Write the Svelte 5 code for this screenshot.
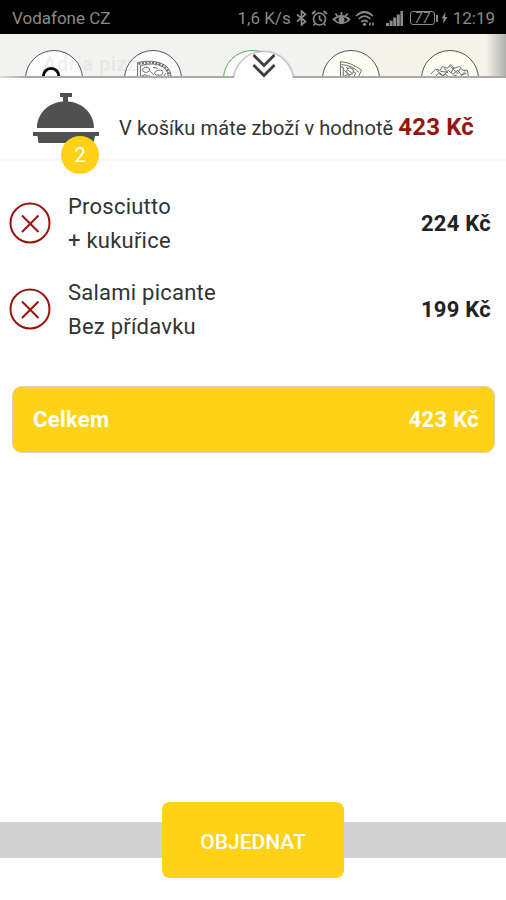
<script>
	let items = $state([
		{ id: 1, name: 'Prosciutto', note: '+ kukuřice', price: 224 },
		{ id: 2, name: 'Salami picante', note: 'Bez přídavku', price: 199 }
	]);

	const total = $derived(items.reduce((sum, item) => sum + item.price, 0));

	function removeItem(id) {
		items = items.filter((item) => item.id !== id);
	}
</script>

<div class="screen">
	<div class="status">
		<span class="carrier">Vodafone CZ</span>
		<div class="indicators">
			<span class="speed">1,6 K/s</span>
			<svg class="bluetooth" width="11" height="16" viewBox="0 0 11 16">
				<path d="M1 4.5l8.5 7L5.5 15V1l4 3.5-8.5 7" />
			</svg>
			<svg class="alarm" width="17" height="17" viewBox="0 0 17 17">
				<circle cx="8.5" cy="9" r="6" />
				<path d="M8.5 5.5V9l2.5 2M1 4l3.5-3M16 4l-3.5-3M4 13.8l-1.5 1.7M13 13.8l1.5 1.7" />
			</svg>
			<svg class="eye" width="19" height="17" viewBox="0 0 19 17">
				<path d="M1.5 9.5Q9.5 2.5 17.5 9.5Q9.5 17 1.5 9.5zM9.5 2v3M3.5 3.5l2 3M15.5 3.5l-2 3" />
				<circle class="solid" cx="9.5" cy="9.7" r="3" />
			</svg>
			<svg class="wifi" width="20" height="17" viewBox="0 0 20 17">
				<path d="M1 6Q9.5-2 18 6M3.6 9Q9.5 3.4 15.4 9M6.2 12Q9.5 9 12.8 12" />
				<circle class="solid" cx="9.5" cy="14.3" r="1.6" />
				<path d="M15 12.5v3M18 12.5v3" />
			</svg>
			<svg class="signal" width="19" height="17" viewBox="0 0 19 17">
				<path class="solid" d="M1 13h3v3H1zM4.6 10.500h3V16h-3zM8.200 7.500h3V16h-3zM11.800 4.500h3V16h-3zM15.400 1H18v15h-2.600z" />
			</svg>
			<span class="battery">77</span>
			<svg class="bolt" width="7" height="12" viewBox="0 0 7 12">
				<path class="solid" d="M4.5 0L0.5 6.5h2.2L2 12l4.5-7H4z" />
			</svg>
			<span class="clock">12:19</span>
		</div>
	</div>

	<div class="categories">
		<div class="category">
			<svg viewBox="0 0 58 28"><circle class="thick" cx="26" cy="26" r="8" /></svg>
		</div>
		<div class="category">
			<svg viewBox="0 0 58 28">
				<path d="M13 30V12q18-4 29 3q6 5 6 15M16 30V15q15-4 24 2q5 4 5 12" />
				<path class="dash" d="M14 13.5q17-4 27 3q5 4 5.5 13" />
				<path d="M18 19q3-4 7-1q2 3-2 4q-4 1-5-3M31 22q4-4 8-1q1 5-5 4q-4 0-3-3M17 26q4-3 7 0M26 21l4 4M29 17l5 1M42 23l-2 4M25 25l2 3" />
			</svg>
		</div>
		<div class="category active"></div>
		<div class="category">
			<svg viewBox="0 0 58 28">
				<path d="M18 30V11q12 1 22 9l-5 10M19 14q11 1 18 8M21 17v12M18 16l3 1" />
				<circle cx="28" cy="21" r="3.5" />
				<path d="M22 20l3 3M31 21l3 2-3 5M22 26q4-3 7 1M26 20l4 3M24 17l2 1" />
			</svg>
		</div>
		<div class="category">
			<svg viewBox="0 0 58 28">
				<path d="M9 24l5-5 5 1 2-4 5 2 4-4 3 4 6-2 3 4 5 0 1 6M12 29l5-6 5 3 5-6 5 4 5-4 4 5 5-2M15 20l6 5M23 18l4 5M33 17l-3 6M40 18l-4 6M45 21l-5 5M18 28l6-4 5 4 5-3 6 3M28 15l8 7M19 21l7 1" />
			</svg>
		</div>
		<span class="shop">Adria pizza</span>
		<button class="collapse" aria-label="Sbalit košík">
			<svg width="24" height="24" viewBox="0 0 24 24">
				<path d="M1.5 1l10.500 10.500L22.500 1M1.500 11L12 21.500 22.500 11" />
			</svg>
		</button>
	</div>

	<header>
		<div class="basket">
			<svg width="66" height="51" viewBox="0 0 66 51">
				<path d="M27 0h12v4h-4v4.500C49 9.500 61 20 61 35H4C4 20 16 9.500 30 8.500V4h-3zM0 39h66v4h-4l-1.500 7h-55L4.500 43H0z" />
			</svg>
			<span class="count">{items.length}</span>
		</div>
		<p>V košíku máte zboží v hodnotě <strong>{total} Kč</strong></p>
	</header>

	<ul>
		{#each items as item (item.id)}
			<li>
				<button class="remove" aria-label="Odebrat" onclick={() => removeItem(item.id)}>
					<svg width="42" height="42" viewBox="0 0 42 42">
						<circle cx="21" cy="21" r="19.500" />
						<path d="M13 13.500l16.500 16.500M29.500 13.500L13 30" />
					</svg>
				</button>
				<div class="desc">
					<span>{item.name}</span>
					<span>{item.note}</span>
				</div>
				<span class="price">{item.price} Kč</span>
			</li>
		{/each}
	</ul>

	<div class="total">
		<span>Celkem</span>
		<span>{total} Kč</span>
	</div>

	<footer>
		<button class="order">OBJEDNAT</button>
	</footer>
</div>

<style>
	:global(body) {
		background: #fefefe;
	}

	.screen {
		width: 506px;
		height: 900px;
		display: flex;
		flex-direction: column;
		overflow: hidden;
		background: #fefefe;
		color: #333;
		font-family: Roboto, sans-serif;
	}

	button {
		border: none;
		padding: 0;
		background: none;
		font-family: inherit;
	}

	svg {
		display: block;
	}

	/* status bar */
	.status {
		height: 34px;
		flex: none;
		box-sizing: border-box;
		display: flex;
		justify-content: space-between;
		align-items: center;
		padding: 2px 11px 0 12px;
		background: #000;
		color: #8a8a8a;
		font-size: 17px;
	}

	.indicators {
		display: flex;
		align-items: center;
	}

	.indicators svg {
		fill: none;
		stroke: #8a8a8a;
		stroke-width: 1.7;
	}

	.indicators .solid {
		fill: #8a8a8a;
		stroke: none;
	}

	.bluetooth {
		margin-left: 5px;
	}

	.alarm {
		margin-left: 4px;
	}

	.eye {
		margin-left: 4px;
	}

	.wifi {
		margin-left: 4px;
	}

	.signal {
		margin-left: 10px;
	}

	.battery {
		position: relative;
		width: 23px;
		height: 12px;
		margin-left: 6px;
		border: 1.5px solid #8a8a8a;
		border-radius: 3px;
		font-size: 14px;
		font-style: italic;
		line-height: 13px;
		text-align: center;
	}

	.battery::after {
		content: '';
		position: absolute;
		right: -4px;
		top: 3px;
		width: 2px;
		height: 7px;
		background: #8a8a8a;
	}

	.bolt {
		margin: 0 5px 0 6px;
	}

	/* pizza categories peeking out behind the basket */
	.categories {
		position: relative;
		height: 44px;
		flex: none;
		box-sizing: border-box;
		display: flex;
		gap: 41px;
		padding: 16px 0 0 25px;
		overflow: hidden;
		background: linear-gradient(90deg, transparent 486px, #aaa 508px),
			linear-gradient(90deg, #f2f2f1 340px, #f4f3e8 390px, #f4f3ea);
	}

	.categories::before {
		content: '';
		position: absolute;
		z-index: 1;
		left: 0;
		right: 0;
		bottom: 0;
		height: 2px;
		background: linear-gradient(90deg, #ddd, #aaa 25px);
	}

	.shop {
		position: absolute;
		left: 43px;
		top: 18px;
		color: rgba(120, 120, 120, 0.09);
		font-size: 20px;
		font-weight: 700;
		letter-spacing: 0.5px;
		line-height: 24px;
	}

	.category {
		position: relative;
		width: 58px;
		height: 58px;
		flex: none;
		box-sizing: border-box;
		border: 1.5px solid #555;
		border-radius: 50%;
		background: #fdfdfd;
	}

	.category:nth-of-type(n + 4) {
		background: #fdfdf4;
	}

	.category.active {
		border-color: #4caf50;
	}

	.category svg {
		width: 56px;
		height: 27px;
		fill: none;
		stroke: #666;
		stroke-width: 1;
	}

	.category .thick {
		stroke: #000;
		stroke-width: 3;
	}

	.category .dash {
		stroke-width: 2;
		stroke-dasharray: 2 1.5;
	}

	.collapse {
		position: absolute;
		z-index: 2;
		left: 234px;
		top: 18px;
		width: 59px;
		height: 59px;
		border-radius: 50%;
		background: #fefefe;
		box-shadow: 0 0 2px 1px #aaa;
	}

	.collapse svg {
		position: absolute;
		left: 18px;
		top: 2px;
		fill: none;
		stroke: #3d3d3d;
		stroke-width: 2.8;
	}

	/* basket summary */
	header {
		height: 83px;
		flex: none;
		box-sizing: border-box;
		display: flex;
		align-items: flex-start;
		padding: 15px 0 0 33px;
		border-bottom: 2px solid #f8f8f8;
	}

	.basket {
		position: relative;
		width: 66px;
	}

	.basket svg {
		fill: #505050;
	}

	.count {
		position: absolute;
		left: 28px;
		top: 43px;
		width: 38px;
		height: 38px;
		border-radius: 50%;
		background: #ffd117;
		color: #fff;
		font-size: 20px;
		line-height: 39px;
		text-align: center;
	}

	header p {
		margin: 19px 0 0 20px;
		font-size: 20px;
		letter-spacing: 0.1px;
		line-height: 30px;
		white-space: nowrap;
	}

	header strong {
		color: #98140c;
		font-size: 24px;
		letter-spacing: 0.15px;
	}

	/* items */
	ul {
		margin: 0;
		padding: 29px 15px 0 9px;
		list-style: none;
	}

	li {
		height: 86px;
		display: flex;
		align-items: flex-start;
	}

	.remove {
		margin-top: 12px;
	}

	.remove svg {
		fill: none;
		stroke: #98140c;
		stroke-width: 2;
	}

	.desc {
		flex: 1;
		display: flex;
		flex-direction: column;
		margin-left: 17px;
		font-size: 22px;
		letter-spacing: 0.23px;
		line-height: 34px;
	}

	.price {
		margin-top: 17px;
		color: #222;
		font-size: 22px;
		font-weight: 700;
		letter-spacing: 0.25px;
		line-height: 34px;
	}

	.total {
		height: 67px;
		flex: none;
		box-sizing: border-box;
		display: flex;
		justify-content: space-between;
		align-items: center;
		margin: 24px 11px 0 12px;
		padding: 0 15px 0 20px;
		border: 1px solid #d8d2b4;
		border-radius: 10px;
		background: #ffd117;
		color: #fff;
		font-size: 22px;
		font-weight: 700;
		letter-spacing: 0.3px;
	}

	footer {
		height: 36px;
		display: flex;
		justify-content: center;
		align-items: center;
		margin: auto 0 42px;
		background: #d2d2d2;
	}

	.order {
		width: 182px;
		height: 76px;
		flex: none;
		box-sizing: border-box;
		padding-top: 3px;
		border-radius: 8px;
		background: #ffd117;
		color: #fff;
		font-size: 21px;
		font-weight: 500;
	}
</style>
